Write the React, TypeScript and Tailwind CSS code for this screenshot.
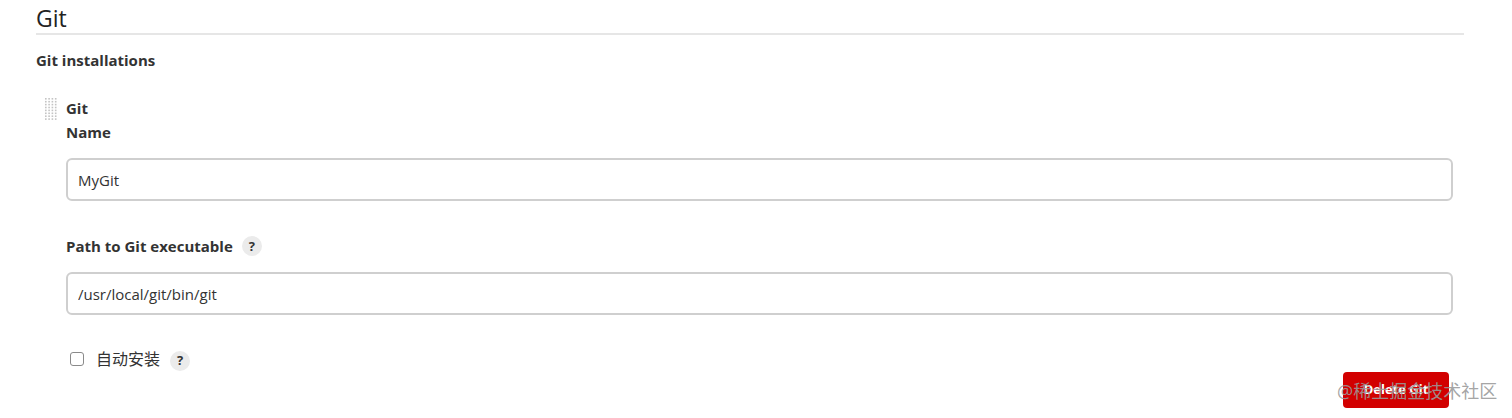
import React from "react";

function HelpBadge() {
  return (
    <span className="inline-flex items-center justify-center w-[20px] h-[20px] rounded-full bg-[#ebebeb] text-[#333] text-[13px] font-bold leading-none">
      ?
    </span>
  );
}

function DragHandle() {
  // dotted grip on the left of a repeatable block
  return (
    <svg width="14" height="24" viewBox="0 0 14 24" className="block">
      {Array.from({ length: 8 }).map((_, r) =>
        Array.from({ length: 4 }).map((_, c) => (
          <rect key={`${r}-${c}`} x={1 + c * 3.3} y={1 + r * 2.9} width="1.6" height="1.6" fill="#c4c4c4" />
        ))
      )}
    </svg>
  );
}

export default function App() {
  return (
    <div
      className="relative w-[1512px] h-[418px] overflow-hidden bg-white text-[#333]"
      style={{ fontFamily: '"Open Sans", "Noto Sans", "Noto Sans CJK SC", sans-serif' }}
    >
      <div className="pl-[36px] pr-[48px]">
        <h1 className="pt-[3px] text-[23px] leading-[30px] font-normal text-[#222] border-b-2 border-[#e6e6e6]">Git</h1>

        <h2 className="mt-[15px] text-[15px] leading-[20px] font-bold">Git installations</h2>

        {/* repeated installation block */}
        <div className="mt-[26px] flex">
          <div className="w-[30px] pl-[8px] pt-[1px]">
            <DragHandle />
          </div>
          <div className="flex-1 pr-[11px]">
            <div className="text-[15px] leading-[24px] font-bold">Git</div>
            <div className="text-[15px] leading-[24px] font-bold">Name</div>
            <input
              type="text"
              defaultValue="MyGit"
              className="mt-[14px] w-full h-[43px] px-[10px] border-2 border-[#cfcfcf] rounded-[6px] text-[15px] text-[#333] outline-none"
            />

            <div className="mt-[33px] flex items-center gap-[9px] text-[15px] leading-[24px] font-bold">
              Path to Git executable
              <HelpBadge />
            </div>
            <input
              type="text"
              defaultValue="/usr/local/git/bin/git"
              className="mt-[14px] w-full h-[43px] px-[10px] border-2 border-[#cfcfcf] rounded-[6px] text-[15px] text-[#333] outline-none"
            />

            <div className="mt-[32px] flex items-center pl-[4px] text-[16px] leading-[24px]">
              <span className="w-[14px] h-[14px] border border-[#8a8a8a] rounded-[3px] bg-white" />
              <span className="ml-[12px]">自动安装</span>
              <span className="ml-[10px]">
                <HelpBadge />
              </span>
            </div>

            <div className="flex justify-end pr-[4px] mt-[1px]">
              <button className="w-[106px] h-[36px] rounded-[4px] bg-[#d20000] text-white text-[13px] font-bold">
                Delete Git
              </button>
            </div>
          </div>
        </div>
      </div>

      <div className="absolute left-[1337px] top-[379px] text-[18px] leading-[24px] text-[#9a9a9a]/90 whitespace-nowrap pointer-events-none">
        @稀土掘金技术社区
      </div>
    </div>
  );
}
